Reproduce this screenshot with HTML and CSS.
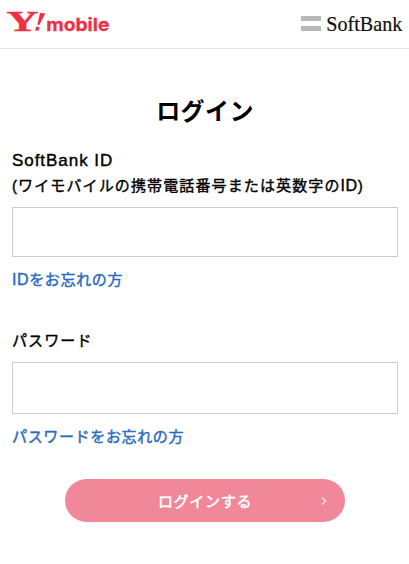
FILE: index.html
```html
<!DOCTYPE html>
<html lang="ja">
<head>
<meta charset="utf-8">
<title>ログイン</title>
<link rel="stylesheet" href="styles.css">
</head>
<body>
<header class="header">
  <svg class="ymobile" viewBox="0 0 104 24" role="img" aria-label="Y!mobile">
    <g fill="#ed3045" stroke="#ed3045">
      <text class="serif" stroke-width=".4" transform="translate(-.4 20.7) scale(1.42 1)" font-size="29.5" textLength="22.4" lengthAdjust="spacingAndGlyphs">Y</text>
      <path stroke="none" d="M33 2.8l5.2 .8-5.8 11.4-2-.2z"/>
      <path stroke="none" d="M29.2 16.6l3.2.5-1 3.7-3.2-.4z"/>
      <text class="mobile" stroke-width=".3" x="39.3" y="20.5" font-size="18" textLength="63" lengthAdjust="spacingAndGlyphs">mobile</text>
    </g>
  </svg>
  <svg class="softbank" viewBox="0 0 103 24" role="img" aria-label="SoftBank">
    <path d="M0 6h20v5H0zM0 16h20v5H0z" fill="#b6b9bb"/>
    <text class="sb" x="25.3" y="20.8" font-size="21.5" textLength="76" lengthAdjust="spacingAndGlyphs">SoftBank</text>
  </svg>
</header>
<main class="main">
  <h1 class="title">ログイン</h1>
  <form class="form">
    <label class="label" for="id">SoftBank ID<br><span class="note">(ワイモバイルの携帯電話番号または英数字の<span class="latin">ID</span>)</span></label>
    <input class="input" id="id" type="text">
    <a class="link" href="#"><span class="latin">ID</span>をお忘れの方</a>
    <label class="label password" for="pw">パスワード</label>
    <input class="input tall" id="pw" type="password">
    <a class="link" href="#">パスワードをお忘れの方</a>
    <button class="submit" type="button">
      <span>ログインする</span>
      <svg class="chevron" viewBox="0 0 6 10"><path d="M1 1.5 4.5 5 1 8.5" fill="none" stroke="#fbdde1" stroke-width="1.4"/></svg>
    </button>
  </form>
</main>
</body>
</html>
```
FILE: styles.css
```css
* { box-sizing: border-box; }
body {
  margin: 0;
  background: #fff;
  color: #000;
  font-family: "Liberation Sans", "Noto Sans CJK JP", sans-serif;
}
.header {
  display: flex;
  justify-content: space-between;
  height: 49px;
  padding: 10px 5px 0 7px;
  border-bottom: 1px solid #e5e5e5;
}
.ymobile { width: 104px; height: 24px; overflow: visible; }
.softbank { width: 103px; height: 24px; overflow: visible; }
.serif { font-family: "Liberation Serif", serif; font-weight: 700; }
.mobile { font-family: "Inter", sans-serif; font-weight: 700; }
.sb { font-family: "Liberation Serif", serif; fill: #111; stroke: #111; stroke-width: .2; }
.main { padding: 45px 11px 0 12px; }
.title {
  margin: 0;
  font-size: 24px;
  line-height: 36px;
  font-weight: 700;
  letter-spacing: .4px;
  text-align: center;
}
.form { display: flex; flex-direction: column; margin-top: 18px; }
.label {
  font-size: 17px;
  line-height: 25px;
  letter-spacing: .95px;
  -webkit-text-stroke: .4px currentColor;
}
.note { font-size: 15px; letter-spacing: 1.12px; white-space: nowrap; }
.latin { font-size: 16px; letter-spacing: .6px; }
.input {
  height: 50px;
  margin: 9px 0 0;
  padding: 0 10px;
  border: 1px solid #ccc;
  border-radius: 0;
  background: #fff;
}
.link {
  align-self: flex-start;
  margin-top: 10px;
  color: #2b6bc0;
  font-size: 15px;
  line-height: 25px;
  letter-spacing: .65px;
  text-decoration: none;
  -webkit-text-stroke: .45px currentColor;
}
.password { margin-top: 36px; font-size: 15px; letter-spacing: 1.1px; }
.tall { height: 52px; }
.submit {
  display: grid;
  grid-template-columns: 1fr auto 1fr;
  align-items: center;
  align-self: center;
  width: 280px;
  height: 43px;
  margin-top: 30px;
  padding: 0 18px;
  border: 0;
  border-radius: 22px;
  background: #f08899;
  color: #fff;
  font: 400 15px/25px "Noto Sans CJK JP", sans-serif;
  letter-spacing: .7px;
}
.submit span { grid-column: 2; -webkit-text-stroke: .5px currentColor; }
.chevron { width: 6px; height: 10px; justify-self: end; }
```
